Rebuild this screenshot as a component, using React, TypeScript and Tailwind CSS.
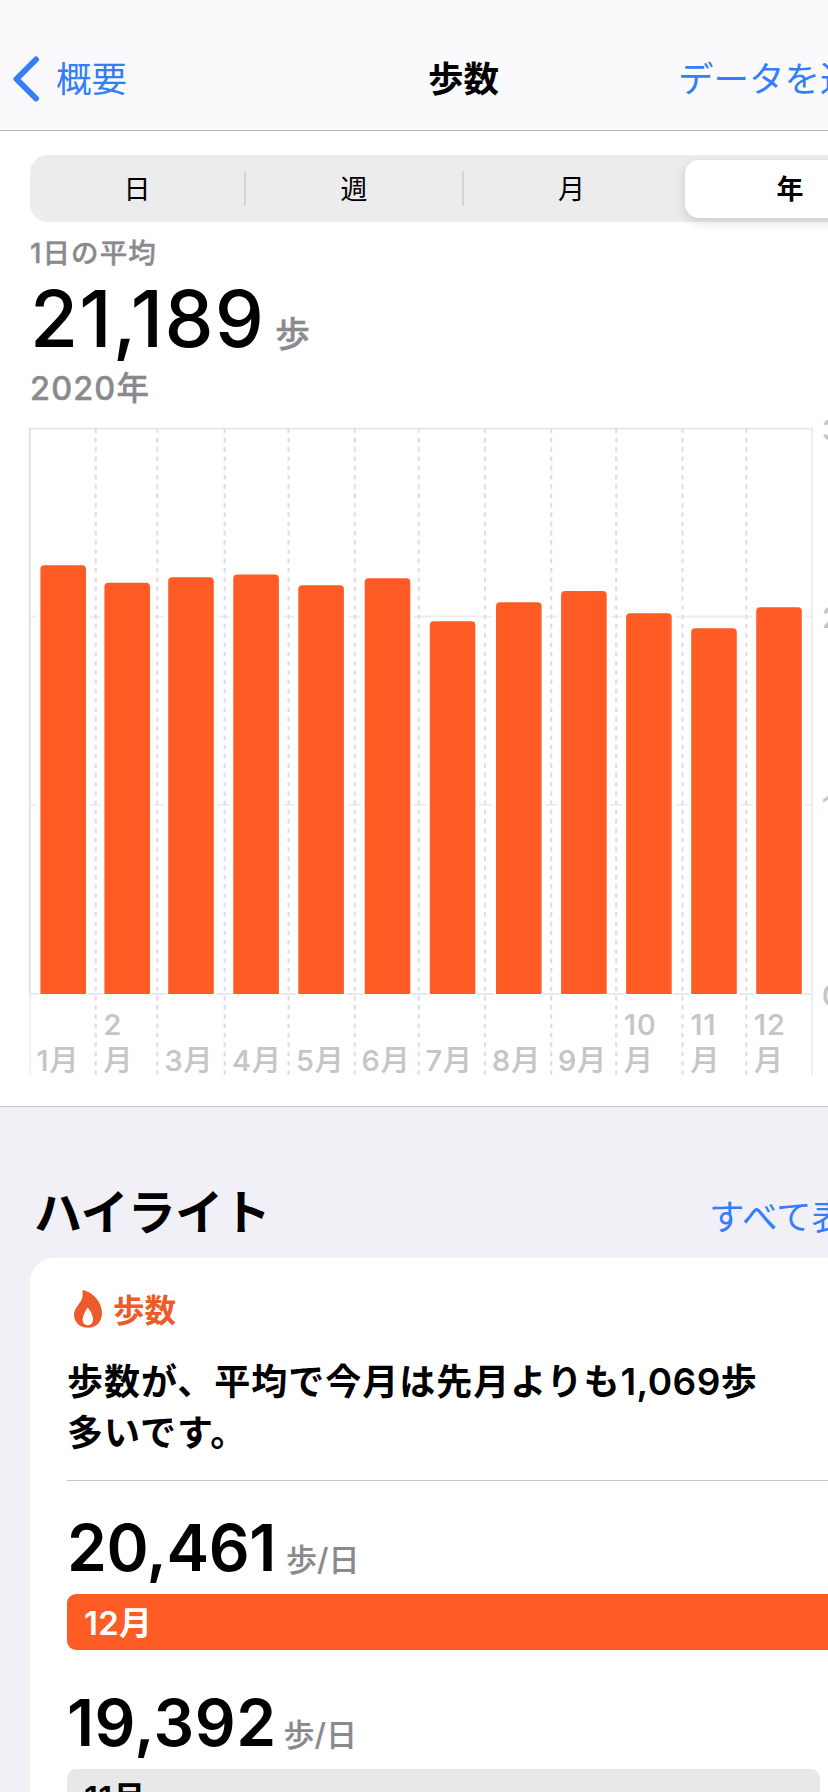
import { clsx } from "clsx"

// ── Chart data ──────────────────────────────────────────────────────────────
interface Month {
  label: string
  x: number
  top: number
  labelX: number
  stacked?: boolean
}

const MONTHS: Month[] = [
  { label: "1", x: 40.4, top: 565.3, labelX: 36.5 },
  { label: "2", x: 104.4, top: 582.8, labelX: 103.5, stacked: true },
  { label: "3", x: 168.2, top: 577.2, labelX: 164.5 },
  { label: "4", x: 233.3, top: 574.5, labelX: 232 },
  { label: "5", x: 298.3, top: 585.2, labelX: 296 },
  { label: "6", x: 364.7, top: 578.2, labelX: 361.5 },
  { label: "7", x: 429.8, top: 621.2, labelX: 425.5 },
  { label: "8", x: 496, top: 602.3, labelX: 492 },
  { label: "9", x: 561.1, top: 591, labelX: 558 },
  { label: "10", x: 626.1, top: 613.2, labelX: 624, stacked: true },
  { label: "11", x: 691.2, top: 628.2, labelX: 690.5, stacked: true },
  { label: "12", x: 756.2, top: 607.3, labelX: 754, stacked: true },
]

const SEPARATORS = [95.7, 157.3, 224.7, 288.6, 354.8, 418.7, 485, 551.2, 616.2, 682.5, 746.3]
const GRID = [616.6, 804.7]
const BASE = 994
const BAR_WIDTH = 45.6

const Y_LABELS = [
  { text: "30,000", y: 439.5 },
  { text: "20,000", y: 628 },
  { text: "10,000", y: 816.5 },
  { text: "0", y: 1005.5 },
]

function StepsChart() {
  return (
    <svg width="828" height="697" viewBox="0 408 828 697" className="block">
      <g stroke="#ededef" strokeWidth="2" fill="none">
        {GRID.map((y) => (
          <path key={y} d={`M30 ${y}H812`} />
        ))}
        <path d={`M29 428.4H812M29 ${BASE}H812`} stroke="#e9e9eb" />
        <path d="M812 428V1075" />
        <path d={`M29.8 428V${BASE}`} stroke="#e3e3e5" />
        <path d={`M30.2 ${BASE}V1075`} strokeWidth="1.5" />
      </g>

      {/* White margin keeps the grid off the bars */}
      {MONTHS.map((m) => (
        <rect key={m.label} x={m.x - 3.6} y={m.top - 3.6} width={BAR_WIDTH + 7.2} height={BASE - m.top + 5} rx="5" fill="#fff" />
      ))}
      {SEPARATORS.map((x) => (
        <path key={x} d={`M${x} 428.5V1075`} stroke="#dfdfe1" strokeWidth="2.2" strokeDasharray="4.6 4.7" />
      ))}
      {MONTHS.map((m) => (
        <path
          key={m.label}
          fill="#ff5b24"
          d={`M${m.x} ${BASE}V${m.top + 4}q0 -4 4 -4h${BAR_WIDTH - 8}q4 0 4 4V${BASE}z`}
        />
      ))}

      <g fill="#c5c5c7" stroke="#c5c5c7" strokeWidth="0.2" fontSize="29" fontWeight="500" letterSpacing="0.9">
        {MONTHS.map((m) =>
          m.stacked ? (
            <g key={m.label}>
              <text x={m.labelX} y="1034.7">{m.label}</text>
              <text x={m.labelX} y="1070.5">月</text>
            </g>
          ) : (
            <text key={m.label} x={m.labelX} y="1070.5">{m.label}月</text>
          )
        )}
        {Y_LABELS.map((l) => (
          <text key={l.text} x="822" y={l.y}>{l.text}</text>
        ))}
      </g>
    </svg>
  )
}

// ── Header bits ─────────────────────────────────────────────────────────────
function NavBar() {
  return (
    <header className="flex h-[131px] shrink-0 items-center justify-between whitespace-nowrap border-b border-[#b4b4b6] bg-[#fafafc] pt-[30px] text-[35.5px] leading-9">
      <div className="flex w-[428px] items-center text-[#347dfb]">
        <svg width="28" height="46" viewBox="0 0 28 46" className="-mt-0.5 ml-[12px] mr-[16px]" fill="none">
          <path d="M24 3.5L4.5 23L24 42.5" stroke="#347dfb" strokeWidth="6" strokeLinecap="round" strokeLinejoin="round" />
        </svg>
        概要
      </div>
      <h1 className="w-[250px] font-bold">歩数</h1>
      <div className="w-[150px] text-[#347dfb]">データを追加</div>
    </header>
  )
}

const RANGES = ["日", "週", "月", "年"]

function RangePicker() {
  return (
    <div className="ml-[30px] mt-[24px] flex h-[67px] w-[872px] shrink-0 items-center rounded-[18px] bg-[#ececec] text-[27px] text-black">
      {RANGES.map((r, i) => (
        <div
          key={r}
          className={clsx(
            "flex items-center justify-center",
            i === 0 && "h-[35px] w-[216px] border-r-2 border-[#d6d6d6]",
            i === 1 && "h-[35px] w-[218px] border-r-2 border-[#d6d6d6]",
            i === 2 && "h-[35px] w-[221px] pr-1.5",
            i === 3 && "h-[58px] w-[210px] rounded-[14px] bg-white font-bold shadow-[0_4px_12px_rgba(0,0,0,0.14)]"
          )}
        >
          <span className="mt-[3px]">{r}</span>
        </div>
      ))}
    </div>
  )
}

function Flame() {
  return (
    <svg width="28" height="38" viewBox="0 0 84 113" className="-mt-0.5 ml-[7px] mr-[11px]">
      <path
        fill="#ed5b2a"
        fillRule="evenodd"
        d="M25 4C25 0 29 -1 34 2C58 10 84 36 84 68C84 95 67 113 42 113C17 113 0 96 0 73C0 47 32 38 25 4ZM38 56C34 66 26 76 26 88C26 99 32 105 41 105C50 105 57 98 57 87C57 76 50 64 44 56C42 53 39 53 38 56Z"
      />
    </svg>
  )
}

// ── Highlight rows ──────────────────────────────────────────────────────────
interface AverageProps {
  value: string
  month: string
  active?: boolean
}

function Average({ value, month, active }: AverageProps) {
  return (
    <div>
      <div className="flex h-16 items-baseline">
        <span className={clsx("text-[64px] font-semibold leading-[64px]", active ? "mr-[10px] tracking-[-0.4px]" : "mr-[7px] tracking-[0.5px]")}>
          {value}
        </span>
        <span className="text-[31px] font-medium leading-none text-[#8a8a8e] [-webkit-text-stroke:0.2px]">歩/日</span>
      </div>
      <div
        className={clsx(
          "mt-[14px] flex h-[56px] items-center rounded-[9px] pl-[17px] pt-[3px] text-[33px] font-semibold tracking-[0.3px]",
          active ? "w-[830px] bg-[#ff5b24] text-white" : "w-[753px] bg-[#e8e8e8] text-black"
        )}
      >
        {month}
      </div>
    </div>
  )
}

export default function App() {
  return (
    <div className="flex h-[1792px] w-[828px] flex-col overflow-hidden bg-[#f1f0f6] font-['Inter','Noto_Sans_CJK_JP',sans-serif] text-black">
      <NavBar />
      <section className="flex h-[976px] shrink-0 flex-col border-b border-[#c2c2c4] bg-white">
        <RangePicker />
        <div className="pl-[30px]">
          <p className="mt-[17px] text-[27.5px] font-medium leading-7 tracking-[1.1px] text-[#8a8a8e] [-webkit-text-stroke:0.4px]">1日の平均</p>
          <div className="mt-[12px] flex h-20 items-baseline">
            <span className="text-[78px] font-medium leading-[80px] tracking-[1.2px]">21,189</span>
            <span className="ml-[10px] text-[35px] font-medium leading-none text-[#8a8a8e] [-webkit-text-stroke:0.4px]">歩</span>
          </div>
          <p className="mt-[12px] text-[32.5px] font-medium leading-9 tracking-[1.1px] text-[#8a8a8e] [-webkit-text-stroke:0.4px]">2020年</p>
        </div>
        <div className="mt-px">
          <StepsChart />
        </div>
      </section>

      <div className="flex h-[151px] shrink-0 items-baseline justify-between whitespace-nowrap pl-[34px] pt-[82px]">
        <h2 className="text-[48px] font-bold leading-[48px] tracking-[-0.6px]">ハイライト</h2>
        <span className="w-[119px] text-[35.5px] leading-none text-[#347dfb]">すべて表示</span>
      </div>

      <section className="ml-[30px] h-[700px] w-[872px] shrink-0 rounded-[24px] bg-white pl-[37px] pt-[33px]">
        <div className="flex h-[38px] items-center text-[31.5px] font-bold leading-8 text-[#ed5b2a]">
          <Flame />
          <span className="mt-0.5">歩数</span>
        </div>
        <p className="mt-[28px] whitespace-nowrap text-[36px] font-bold leading-[51px] tracking-[1px]">
          歩数が、平均で今月は先月よりも
          <span className="text-[37px] font-semibold leading-none tracking-[0.4px]">1,069</span>歩
          <br />
          多いです。
        </p>
        <div className="mt-[21px] h-px bg-[#c6c6c8]" />
        <div className="mt-[35px] flex flex-col gap-[41px]">
          <Average value="20,461" month="12月" active />
          <Average value="19,392" month="11月" />
        </div>
      </section>
    </div>
  )
}
